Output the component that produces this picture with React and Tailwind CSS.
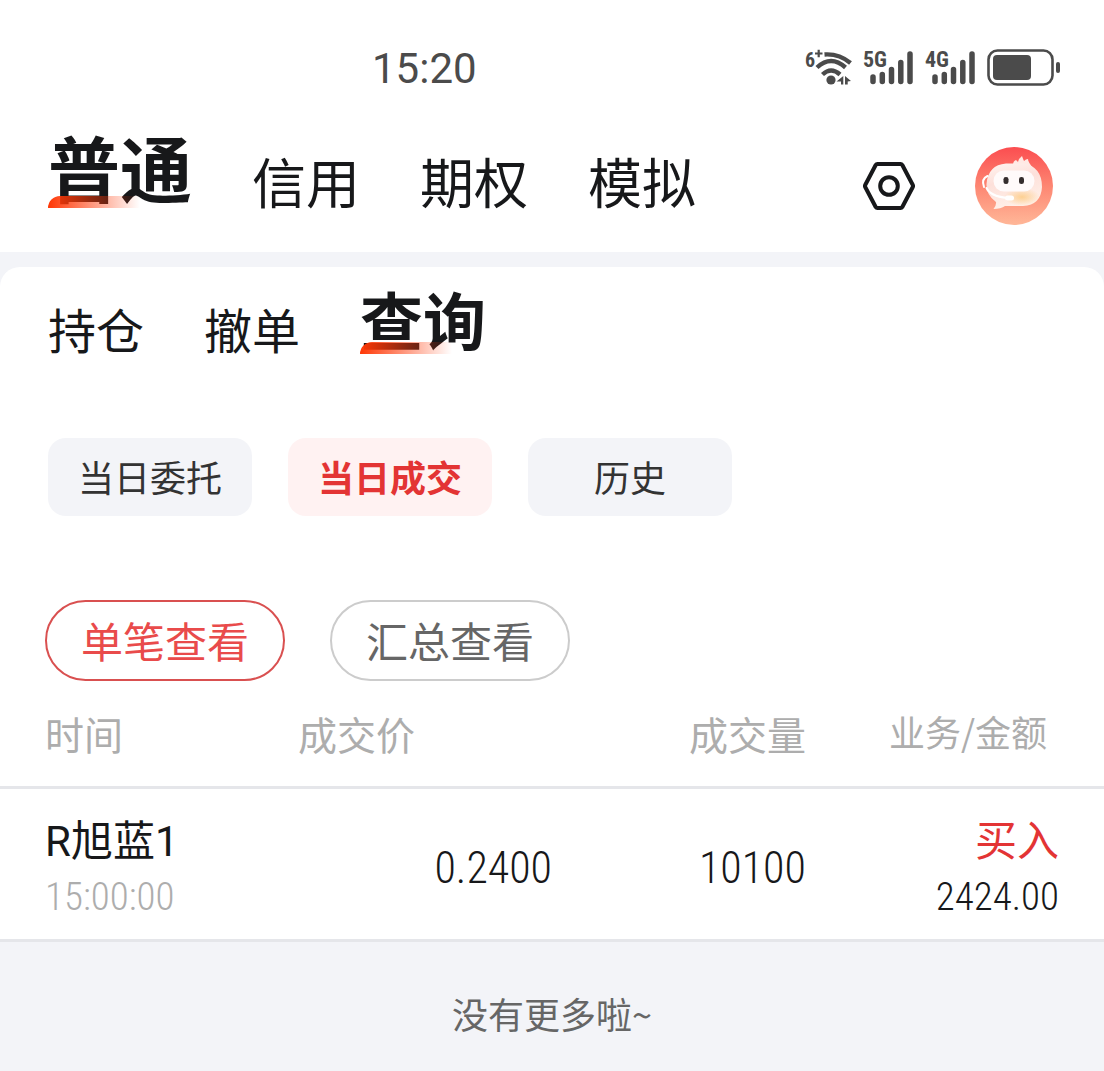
const mainTabs = ['普通', '信用', '期权', '模拟']
const subTabs = ['持仓', '撤单', '查询']
const ranges = ['当日委托', '当日成交', '历史']
const views = ['单笔查看', '汇总查看']

const trades = [
    { name: 'R旭蓝1', time: '15:00:00', price: '0.2400', volume: '10100', side: '买入', amount: '2424.00' },
]

const labelFont = "'Roboto Condensed', 'Liberation Sans Narrow', Roboto, sans-serif"

function WifiIcon() {
    return (
        <svg className="overflow-visible" width="50" height="38" viewBox="0 0 50 38" fill="none" stroke="#4b4b4b" strokeWidth="4.4">
            <path d="M21.500 6.500Q36 5.500 47.500 15" />
            <path d="M14 19.500Q28 6.500 42.500 19.500" />
            <path d="M19.500 26.500Q28 18.500 37 26.500" />
            <circle cx="28" cy="32" r="4.600" fill="#4b4b4b" stroke="none" />
            <path d="M40.300 28v8.500h-2.300v-3h-4.500zM42 36.500v-8.500l6 5-3.300.500v3z" fill="#4b4b4b" stroke="none" />
            <text x="2" y="19" fontSize="20" fontWeight="700" fontFamily={labelFont} fill="#4b4b4b" stroke="none">6</text>
            <path d="M12 5.500h7.500M15.700 1.800v7.500" strokeWidth="2.200" />
        </svg>
    )
}

function SignalIcon({ label }) {
    return (
        <svg className="overflow-visible" width="52" height="38" viewBox="0 0 52 38" stroke="#4b4b4b" strokeWidth="5.500" strokeLinecap="round">
            <path d="M10 29v4.500M19.300 26.500v7M28.500 21.500v12M37.800 14.500v19M47 6v27.500" />
            <text x="0" y="19" fontSize="22" fontWeight="700" fontFamily={labelFont} fill="#4b4b4b" stroke="none">{label}</text>
        </svg>
    )
}

function BatteryIcon() {
    return (
        <svg width="74" height="38" viewBox="0 0 74 38">
            <rect x="1.500" y="2.500" width="64" height="34" rx="9" fill="none" stroke="#4b4b4b" strokeWidth="2.600" />
            <rect x="6" y="7" width="38" height="25" rx="4" fill="#4b4b4b" />
            <rect x="69" y="14" width="4" height="11" rx="2" fill="#4b4b4b" />
        </svg>
    )
}

function SettingsIcon() {
    return (
        <svg width="54" height="50" viewBox="0 0 54 50" fill="none" stroke="#17181a" strokeWidth="4" strokeLinejoin="round">
            <path d="M16.500 3h23q1.200 0 1.800 1L51.800 24q.5 1 0 2L41.300 46q-.6 1-1.800 1h-23q-1.200 0-1.800-1L4.200 26q-.5-1 0-2L14.700 4q.6-1 1.800-1z" />
            <circle cx="28" cy="25" r="8.800" />
        </svg>
    )
}

function AssistantAvatar() {
    return (
        <svg width="78" height="78" viewBox="0 0 78 78">
            <defs>
                <linearGradient id="avatarBg" x1="0" y1="0" x2="0" y2="1">
                    <stop offset="0" stopColor="#fb4d50" />
                    <stop offset="0.500" stopColor="#fd8672" />
                    <stop offset="1" stopColor="#ffb798" />
                </linearGradient>
                <linearGradient id="avatarHead" x1="0" y1="0" x2="0.300" y2="1">
                    <stop offset="0" stopColor="#fff4f1" />
                    <stop offset="0.450" stopColor="#fde0da" />
                    <stop offset="1" stopColor="#fff0e8" />
                </linearGradient>
                <radialGradient id="avatarGlow">
                    <stop offset="0" stopColor="#fdd092" />
                    <stop offset="1" stopColor="#fdd092" stopOpacity="0" />
                </radialGradient>
            </defs>
            <circle cx="39" cy="39" r="39" fill="url(#avatarBg)" />
            <path d="M38 18q0-4 3-5l2 2q1-4 4-6 1 3 2 5 2-2 4-2 0 3 5 9z" fill="#ffe9e4" />
            <path d="M31 16.500H49Q67 20 67 40 66 58 48 59H30Q26 62 18.500 62 21.500 58 21 55 11 48 11.500 37 13 18 31 16.500z" fill="url(#avatarHead)" />
            <ellipse cx="47" cy="50" rx="18" ry="9" fill="url(#avatarGlow)" />
            <rect x="18.500" y="23.500" width="41" height="21" rx="10.500" fill="#fffafa" />
            <rect x="28.500" y="30" width="5" height="7" rx="2.300" fill="#342d2d" />
            <rect x="44" y="30" width="5" height="7" rx="2.300" fill="#342d2d" />
            <path d="M12.500 29Q6 32 9 40M11.500 41Q15 49 32 51" fill="none" stroke="#fff" strokeWidth="2" strokeLinecap="round" />
            <rect x="30" y="48.500" width="9" height="5" rx="2.500" fill="#fff" />
        </svg>
    )
}

// Red swoosh drawn over the lower edge of the selected tab
function Swoosh() {
    return (
        <span className="absolute bottom-0 left-0 h-3 w-[92px] rounded-tl-xl bg-linear-to-r from-[#ff3705] to-[#ff3705]/0"></span>
    )
}

function App() {
    return (
        <div className="min-h-screen bg-[#f3f4f8] font-['Noto_Sans_CJK_SC',sans-serif] text-[#17181a]">
            <header className="bg-white">
                <div className="flex h-[108px] items-end justify-between pr-[43px] pb-[22px] pl-[372px]">
                    <time className="font-[Roboto,sans-serif] text-[42px] leading-[34px] text-[#4b4b4b]">15:20</time>
                    <div className="flex items-center gap-2.5">
                        <WifiIcon />
                        <SignalIcon label="5G" />
                        <SignalIcon label="4G" />
                        <BatteryIcon />
                    </div>
                </div>
                <div className="flex h-36 items-start justify-between pr-[51px] pl-12">
                    <nav className="flex h-[100px] items-end gap-[60px]">
                        {mainTabs.map((tab, i) => (
                            <button
                                key={tab}
                                className={i === 0
                                    ? 'relative text-[72px] leading-[84px] font-bold'
                                    : 'text-[54px] leading-[54px]'}
                            >
                                {tab}
                                {i === 0 && <Swoosh />}
                            </button>
                        ))}
                    </nav>
                    <div className="flex items-center gap-[60px] pt-[39px]">
                        <button aria-label="设置"><SettingsIcon /></button>
                        <button aria-label="智能助手"><AssistantAvatar /></button>
                    </div>
                </div>
            </header>

            <main className="mt-[15px] rounded-t-[20px] bg-white">
                <nav className="flex h-[87px] items-end gap-[60px] px-12">
                    {subTabs.map((tab, i) => (
                        <button
                            key={tab}
                            className={i === 2
                                ? 'relative text-[63px] leading-[72px] font-bold'
                                : 'text-[48px] leading-[52px]'}
                        >
                            {tab}
                            {i === 2 && <Swoosh />}
                        </button>
                    ))}
                </nav>

                <div className="flex gap-9 px-12 pt-[84px]">
                    {ranges.map((range, i) => (
                        <button
                            key={range}
                            className={i === 1
                                ? 'h-[78px] w-[204px] rounded-[18px] bg-[#fff2f2] pb-0.5 text-[36px] font-bold text-[#e33434]'
                                : 'h-[78px] w-[204px] rounded-[18px] bg-[#f3f4f8] pb-0.5 text-[36px] text-[#333333]'}
                        >
                            {range}
                        </button>
                    ))}
                </div>

                <div className="flex gap-[45px] px-[45px] pt-[84px]">
                    {views.map((view, i) => (
                        <button
                            key={view}
                            className={i === 0
                                ? 'h-[81px] w-60 rounded-full border-2 border-[#d95050] pb-0.5 text-[42px] text-[#e94b4b]'
                                : 'h-[81px] w-60 rounded-full border-2 border-[#cccccc] pb-0.5 text-[42px] text-[#666666]'}
                        >
                            {view}
                        </button>
                    ))}
                </div>

                <table className="w-full table-fixed">
                    <thead>
                        <tr className="h-[106px] border-b-3 border-[#e5e6ea] text-[39px] text-[#adadad]">
                            <th className="w-[27%] pl-[45px] text-left font-normal">时间</th>
                            <th className="w-[23%] text-left font-normal">成交价</th>
                            <th className="w-[23%] text-right font-normal">成交量</th>
                            <th className="pr-[57px] pb-1 text-right text-[36px] font-normal">业务/金额</th>
                        </tr>
                    </thead>
                    <tbody>
                        {trades.map(trade => (
                            <tr key={trade.name} className="h-[153px] border-b-3 border-[#e5e6ea] font-['Roboto_Condensed',Roboto,'Noto_Sans_CJK_SC',sans-serif] text-[44px]">
                                <td className="pt-2.5 pl-[45px]">
                                    <div className="font-[Roboto,'Noto_Sans_CJK_SC',sans-serif] text-[42px] leading-[56px]">{trade.name}</div>
                                    <div className="text-[39px] leading-[54px] font-light text-[#adadad]">{trade.time}</div>
                                </td>
                                <td className="pt-2 text-right font-light">{trade.price}</td>
                                <td className="pt-2 text-right font-light">{trade.volume}</td>
                                <td className="pt-2.5 pr-[45px] text-right">
                                    <div className="text-[42px] leading-[56px] text-[#e33434]">{trade.side}</div>
                                    <div className="text-[39px] leading-[54px] font-light">{trade.amount}</div>
                                </td>
                            </tr>
                        ))}
                    </tbody>
                </table>
            </main>

            <p className="py-[46px] text-center text-[36px] leading-[50px] text-[#666666]">没有更多啦~</p>
        </div>
    )
}

export default App
